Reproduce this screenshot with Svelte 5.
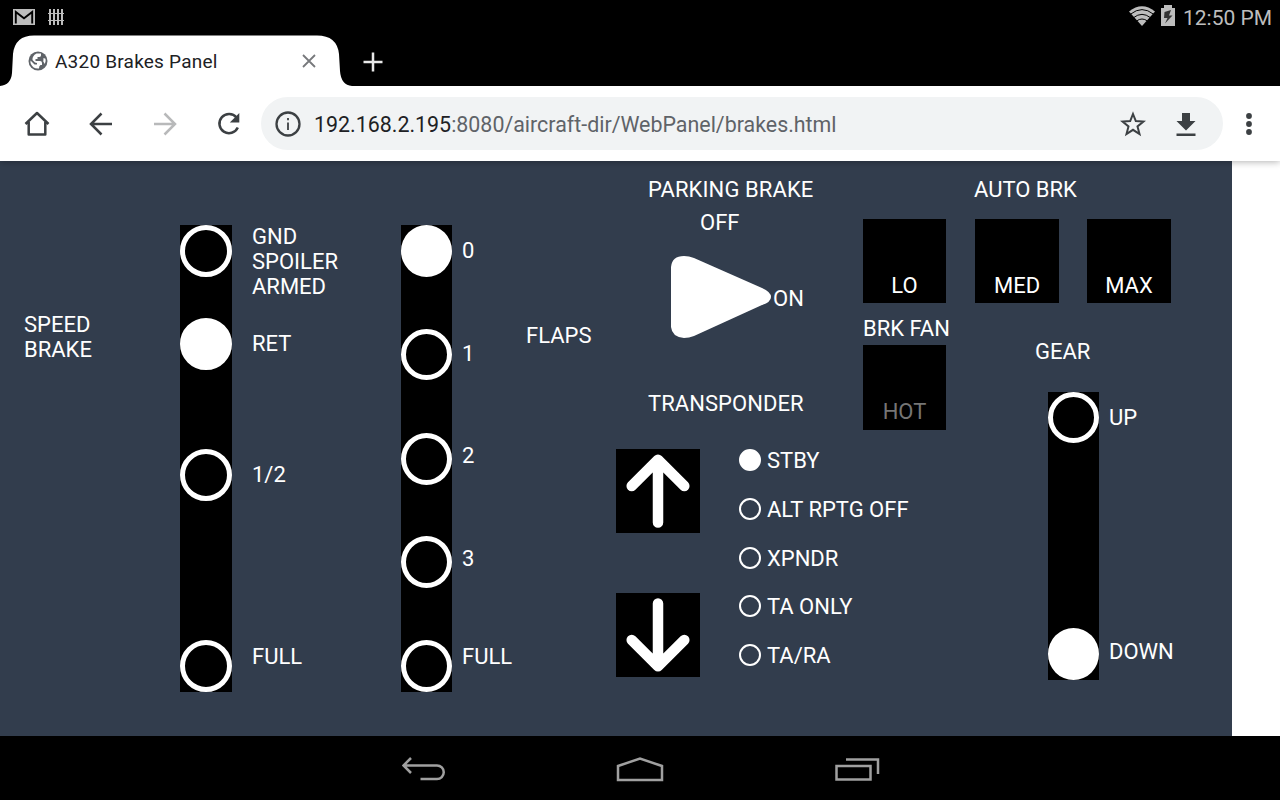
<script>
  const speedStops = [
    { label: 'GND SPOILER ARMED', gap: 0, lead: -1 },
    { label: 'RET', on: true, gap: 41, lead: 32 },
    { label: '1/2', gap: 79, lead: 106 },
    { label: 'FULL', gap: 139, lead: 157 }
  ];
  const flapStops = [
    { label: '0', on: true, gap: 0, lead: 13 },
    { label: '1', gap: 52, lead: 78 },
    { label: '2', gap: 53, lead: 77 },
    { label: '3', gap: 51, lead: 78 },
    { label: 'FULL', gap: 52, lead: 73 }
  ];
  const modes = ['STBY', 'ALT RPTG OFF', 'XPNDR', 'TA ONLY', 'TA/RA'];
  const autoBrake = ['LO', 'MED', 'MAX'];
</script>

<div class="screen">
  <header class="status">
    <svg class="mail" width="22" height="16" viewBox="0 0 22 16"><rect width="22" height="16" fill="#bdbdbd"/><path d="M2.800 14.500V3L11 9.300L19.200 3V14.500" fill="none" stroke="#000" stroke-width="1.900"/></svg>
    <svg class="fence" width="16" height="16" viewBox="0 0 16 16"><path d="M2 0V16M6 0V16M10 0V16M14 0V16" stroke="#bdbdbd" stroke-width="2"/><path d="M0 4.500H16M0 11.500H16" stroke="#bdbdbd" stroke-width="1.100"/></svg>
    <span class="grow"></span>
    <svg class="wifi" width="26" height="20" viewBox="0 0 26 20"><path d="M0 5.500Q13-5 26 5.500L13 20Z" fill="#bdbdbd"/><path d="M1.500 8.200Q13-1 24.500 8.200M4.500 11.700Q13 5 21.500 11.700M7.500 15Q13 11 18.500 15" fill="none" stroke="#000" stroke-width="1"/></svg>
    <svg class="battery" width="14" height="21" viewBox="0 0 14 21"><path d="M0 3H3V0H11V3H14V21H0Z" fill="#bdbdbd"/><path d="M10 5L3.500 7L3 13H6.500L4 18.500L11.500 10.500H8Z" fill="#333"/></svg>
    <span class="clock">12:50 PM</span>
  </header>

  <div class="tabs">
    <div class="tab">
      <svg class="tabshape" width="352" height="51" viewBox="0 0 352 51"><path d="M0 51Q11 50 12 38L13 19Q15 .5 34 .5H317Q337 .5 339 19L340 36Q341 50 352 51Z" fill="#fff"/></svg>
      <svg class="globe" width="20" height="20" viewBox="0 0 20 20"><circle cx="10" cy="10" r="9.500" fill="#5f6368"/><path d="M8.500 2.500H13V4.500Q12.800 6 11 6H9.500V8H7.500V10H12Q14 10 14 12V14H12.500Q11 14.500 11 17.500Q4.500 18 2.500 12V9.500L6.500 13.500H9V12L7 11.500L4.500 9Q4 5 8.500 2.500ZM15.500 7L17.500 7.800Q18.200 10.500 16.800 13L15.300 10.500Z" fill="#fff"/></svg>
      <span class="title">A320 Brakes Panel</span>
      <svg class="close" width="14" height="14" viewBox="0 0 14 14"><path d="M1 1L13 13M13 1L1 13" stroke="#77797c" stroke-width="1.800"/></svg>
    </div>
    <svg class="plus" width="20" height="20" viewBox="0 0 20 20"><path d="M10 .5V19.500M.5 10H19.500" stroke="#e8e8e8" stroke-width="2.500"/></svg>
  </div>

  <nav class="toolbar">
    <svg class="home" width="26" height="26" viewBox="0 0 26 26"><path d="M1.500 13L13 2L24.500 13M4.700 11V23.500H21.300V11" fill="none" stroke="#3c4043" stroke-width="2.500" stroke-linejoin="round"/></svg>
    <svg class="back" width="24" height="24" viewBox="0 0 24 24"><path d="M23 12H2.500M12.500 1.500L2 12L12.500 22.500" fill="none" stroke="#3c4043" stroke-width="2.500"/></svg>
    <svg class="fwd" width="24" height="24" viewBox="0 0 24 24"><path d="M1 12H21.500M11.500 1.500L22 12L11.500 22.500" fill="none" stroke="#b8b9ba" stroke-width="2.500"/></svg>
    <svg class="reload" width="24" height="24" viewBox="0 0 24 24"><path d="M19.500 5.500A9.600 9.600 0 1 0 20.800 15.500" fill="none" stroke="#3c4043" stroke-width="2.500"/><path d="M22.300 1V10.500H12.800Z" fill="#3c4043"/></svg>
    <div class="omnibox">
      <svg class="info" width="26" height="26" viewBox="0 0 26 26"><circle cx="13" cy="13" r="11.500" fill="none" stroke="#3c4043" stroke-width="2.300"/><path d="M13 11.500V19M13 7V9.300" stroke="#3c4043" stroke-width="1.800"/></svg>
      <span class="url"><b>192.168.2.195</b>:8080/aircraft-dir/WebPanel/brakes.html</span>
      <svg class="star" width="26" height="26" viewBox="0 0 26 26"><path d="M13 3L15.800 10.100L23.500 10.500L17.500 15.400L19.500 23L13 18.800L6.500 23L8.500 15.400L2.500 10.500L10.200 10.100Z" fill="none" stroke="#3c4043" stroke-width="2"/></svg>
      <svg class="download" width="20" height="24" viewBox="0 0 20 24"><path d="M6 0H14V8H19.500L10 17.500L.5 8H6ZM.5 20.500H19.500V23H.5Z" fill="#3c4043"/></svg>
    </div>
    <svg class="more" width="6" height="22" viewBox="0 0 6 22"><circle cx="3" cy="3" r="2.900"/><circle cx="3" cy="11" r="2.900"/><circle cx="3" cy="19" r="2.900"/></svg>
  </nav>

  <main>
    <div class="panel">
      <div class="caption speed">SPEED<br />BRAKE</div>
      <div class="track wide">
        {#each speedStops as s}
          <i class="knob" class:on={s.on} style="margin-top:{s.gap}px"></i>
        {/each}
      </div>
      <div class="labels speedlabels">
        {#each speedStops as s}<span style="margin-top:{s.lead}px">{s.label}</span>{/each}
      </div>
      <div class="track flaps">
        {#each flapStops as s}<i class="knob" class:on={s.on} style="margin-top:{s.gap}px"></i>{/each}
      </div>
      <div class="labels flaplabels">
        {#each flapStops as s}<span style="margin-top:{s.lead}px">{s.label}</span>{/each}
      </div>
      <div class="caption flapcap">FLAPS</div>

      <section class="mid">
        <div class="pb">PARKING BRAKE</div>
        <div class="off">OFF</div>
        <div class="lever">
          <svg width="101" height="84" viewBox="0 0 101 84"><path d="M0 12Q1 1 13 1Q18 1 23 3L91 33Q100 37 100 42Q100 47 91 50L23 81Q18 83 13 83Q1 82 0 72Z" fill="#fff"/></svg>
          <span>ON</span>
        </div>
        <div class="xp">TRANSPONDER</div>
        <div class="xpbody">
          <div class="arrows">
            <button aria-label="Up"><svg width="84" height="84" viewBox="0 0 84 84"><path d="M42 73.500V11M15.700 37L42 10.700L68.300 37"/></svg></button>
            <button aria-label="Down"><svg width="84" height="84" viewBox="0 0 84 84"><path d="M42 10.500V73M15.700 47L42 73.300L68.300 47"/></svg></button>
          </div>
          <div class="modes">
            {#each modes as m, n}<div class="mode"><i class:on={n === 0}></i>{m}</div>{/each}
          </div>
        </div>
      </section>

      <section class="right">
        <div class="ab">AUTO BRK</div>
        <div class="keys">
          {#each autoBrake as k}<button>{k}</button>{/each}
        </div>
        <div class="lower">
          <div class="fan">
            <div>BRK FAN</div>
            <button class="hot">HOT</button>
          </div>
          <div class="gear">
            <div class="gearcap">GEAR</div>
            <div class="gearrow">
              <div class="track geartrack"><i class="knob"></i><i class="knob on"></i></div>
              <div class="gearlabels"><span>UP</span><span>DOWN</span></div>
            </div>
          </div>
        </div>
      </section>
    </div>
  </main>

  <footer>
    <svg width="44" height="24" viewBox="0 0 44 24"><path d="M1.500 8.500H35A6.500 6.500 0 0 1 35 22H18.500M9 1L1.500 8.500L9 16"/></svg>
    <svg width="48" height="26" viewBox="0 0 48 26"><path d="M2 10L24 2.500L46 10V24H2Z"/></svg>
    <svg width="46" height="24" viewBox="0 0 46 24"><path d="M2.500 9H36.500V22.500H2.500ZM12 2.500H44V17"/></svg>
  </footer>
</div>

<style>
  :global(body) { margin: 0; overflow: hidden; }
  .screen { width: 1280px; height: 800px; display: flex; flex-direction: column; background: #000; font-family: Roboto, sans-serif; }
  svg { display: block; flex: none; }
  .status { height: 35px; display: flex; align-items: center; box-sizing: border-box; padding: 0 8px 0 13px; color: #bdbdbd; }
  .mail, .fence { margin-top: -1px; }
  .fence { margin-left: 13px; }
  .grow { flex: 1; }
  .wifi { margin: -4px 6px 0 0; }
  .battery { margin: -4px 8px 0 0; }
  .clock { font-size: 21px; line-height: 26px; width: 89px; margin-top: 1px; white-space: nowrap; }
  .tabs { height: 51px; display: flex; }
  .tab { width: 352px; position: relative; display: flex; align-items: center; }
  .tabshape { position: absolute; left: 0; top: 0; }
  .globe { position: relative; margin-left: 28px; }
  .title { position: relative; margin: 2px 0 0 7px; width: 247px; font-size: 19px; letter-spacing: .22px; line-height: 26px; color: #202124; }
  .close { position: relative; margin-top: 1px; }
  .plus { margin: 17px 0 0 11px; }
  .toolbar { height: 75px; flex: none; background: #fff; display: flex; align-items: center; position: relative; box-shadow: 0 1px 7px rgba(0,0,0,.3); clip-path: inset(0 0 -10px 0); z-index: 2; }
  .toolbar > svg { margin-top: 1px; }
  .home { margin-left: 24px; }
  .back { margin-left: 39px; }
  .fwd { margin-left: 40px; }
  .reload { margin-left: 40px; }
  .omnibox { width: 962px; height: 53px; box-sizing: border-box; margin-left: 20px; border-radius: 27px; background: #f1f3f4; display: flex; align-items: center; padding: 1px 0 0 14px; }
  .url { margin-left: 13px; width: 806px; font-size: 21.400px; line-height: 26px; color: #5f6368; white-space: nowrap; padding-top: 1px; }
  .url b { font-weight: 400; color: #202124; }
  .download { margin-left: 30px; margin-top: 2px; }
  .more { margin-left: 23px; fill: #3c4043; }
  main { height: 575px; flex: none; background: #fff; }
  .panel { width: 1232px; height: 575px; box-sizing: border-box; background: #323d4d; color: #fff; display: flex; align-items: flex-start; font-size: 22px; line-height: 25px; }
  .caption.speed { width: 156px; padding: 151px 0 0 24px; }
  .track { background: #000; display: flex; flex-direction: column; flex: none; }
  .wide { width: 52px; height: 467px; margin-top: 64px; }
  .flaps { width: 51px; height: 467px; margin-top: 64px; }
  .knob { height: 52px; flex: none; box-sizing: border-box; border: 5px solid #fff; border-radius: 50%; }
  .flaps .knob:nth-child(2) { height: 51px; }
  .geartrack .knob:first-child { height: 51px; }
  .knob.on { background: #fff; }
  .labels { display: flex; flex-direction: column; padding-top: 64px; }
  .speedlabels { margin-left: 20px; width: 149px; }
  .speedlabels span { width: 90px; }
  .flaplabels { margin-left: 10px; width: 64px; }
  .flapcap { padding-top: 162px; width: 90px; }
  .mid { width: 247px; }
  .pb { padding: 16px 0 0 32px; white-space: nowrap; letter-spacing: .1px; }
  .off { padding: 8px 0 0 84px; }
  .lever { display: flex; padding: 20px 0 0 55px; height: 84px; }
  .lever span { margin: 31px 0 0 1px; }
  .xp { padding: 52px 0 0 32px; letter-spacing: .06px; }
  .xpbody { display: flex; padding-top: 33px; }
  button { font: inherit; color: #fff; background: #000; border: 0; padding: 0; display: block; flex: none; }
  .arrows { display: flex; flex-direction: column; gap: 60px; }
  .arrows path { fill: none; stroke: #fff; stroke-width: 10.500; stroke-linecap: round; stroke-linejoin: round; }
  .modes { margin: -1px 0 0 39px; display: flex; flex-direction: column; gap: 23.750px; }
  .mode { display: flex; align-items: center; white-space: nowrap; }
  .mode i { width: 22px; height: 22px; box-sizing: border-box; border: 2px solid #fff; border-radius: 50%; margin: 0 6px 1px 0; }
  .mode i.on { background: #fff; }
  .right { width: 369px; }
  .ab { padding: 16px 0 0 111px; }
  .keys { display: flex; gap: 28px; padding-top: 17px; }
  .keys button { width: 84px; height: 84px; padding-top: 49px; }
  .keys button:first-child, .hot { width: 83px; margin-right: 1px; }
  .lower { display: flex; padding-top: 13px; }
  .fan { width: 172px; }
  .hot { height: 85px; margin-top: 4px; padding-top: 47px; color: #757575; }
  .gear { padding-top: 23px; }
  .gearrow { display: flex; padding: 28px 0 0 13px; }
  .geartrack { width: 51px; height: 288px; justify-content: space-between; }
  .gearlabels { display: flex; flex-direction: column; gap: 209px; padding: 13px 0 0 10px; }
  footer { height: 64px; display: flex; justify-content: center; align-items: center; gap: 170px; padding: 2px 0 0 2px; box-sizing: border-box; }
  footer path { fill: none; stroke: #a0a0a0; stroke-width: 2.500; }
</style>
